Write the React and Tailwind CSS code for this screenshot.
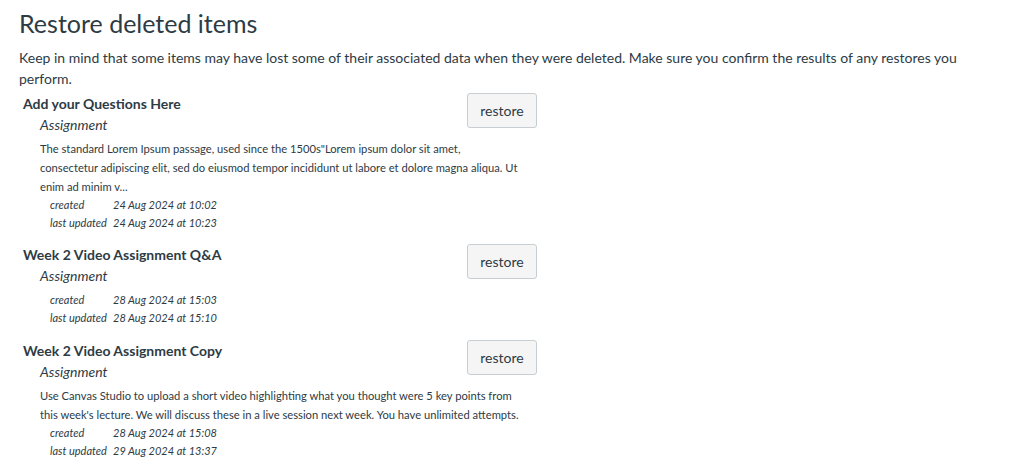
import React from "react";

const items = [
  {
    title: "Add your Questions Here",
    type: "Assignment",
    desc: [
      "The standard Lorem Ipsum passage, used since the 1500s\"Lorem ipsum dolor sit amet,",
      "consectetur adipiscing elit, sed do eiusmod tempor incididunt ut labore et dolore magna aliqua. Ut",
      "enim ad minim v...",
    ],
    created: "24 Aug 2024 at 10:02",
    updated: "24 Aug 2024 at 10:23",
    pb: "pb-[12px]",
  },
  {
    title: "Week 2 Video Assignment Q&A",
    type: "Assignment",
    desc: null,
    created: "28 Aug 2024 at 15:03",
    updated: "28 Aug 2024 at 15:10",
    pb: "pb-[13px]",
  },
  {
    title: "Week 2 Video Assignment Copy",
    type: "Assignment",
    desc: [
      "Use Canvas Studio to upload a short video highlighting what you thought were 5 key points from",
      "this week's lecture. We will discuss these in a live session next week. You have unlimited attempts.",
    ],
    created: "28 Aug 2024 at 15:08",
    updated: "29 Aug 2024 at 13:37",
    pb: "pb-[12px]",
  },
];

function Item({ item }) {
  return (
    <div className={"flex w-[518px] items-start justify-between " + item.pb}>
      <div className="w-[448px] shrink-0 pl-[4px] pt-[1px]">
        <div className="text-[14px] font-bold leading-[20px]">{item.title}</div>
        <div className="pl-[17px]">
          <div className="text-[14px] italic leading-[22px]">{item.type}</div>
          {item.desc && (
            <div className="mt-[3px] w-[490px] text-[11.2px] leading-[19px]">
              {item.desc.map((line, i) => (
                <div key={i} className="whitespace-nowrap">
                  {line}
                </div>
              ))}
            </div>
          )}
          <div
            className={
              item.desc
                ? "mt-[0px] pl-[10px] text-[11px] italic leading-[18px]"
                : "mt-[4px] pl-[10px] text-[11px] italic leading-[18px]"
            }
          >
            <div className="flex">
              <span className="w-[63px]">created</span>
              <span>{item.created}</span>
            </div>
            <div className="flex">
              <span className="w-[63px]">last updated</span>
              <span>{item.updated}</span>
            </div>
          </div>
        </div>
      </div>
      <button className="h-[35px] w-[70px] shrink-0 rounded-[3px] border border-[#c7cdd1] bg-[#f5f5f5] text-[14px] text-[#2d3b45]">
        restore
      </button>
    </div>
  );
}

export default function App() {
  return (
    <div
      className="h-[471px] overflow-hidden bg-white px-[19px] pt-[5px] text-[#2d3b45]"
      style={{ fontFamily: "Lato, 'Helvetica Neue', Arial, sans-serif" }}
    >
      <h1 className="text-[25px] font-normal leading-[36px]">Restore deleted items</h1>
      <p className="mt-[6px] w-[960px] text-[14px] leading-[21px]">
        Keep in mind that some items may have lost some of their associated data when they were deleted. Make sure you confirm the results of any restores you perform.
      </p>
      <div className="mt-[4px]">
        {items.map((it) => (
          <Item key={it.title} item={it} />
        ))}
      </div>
    </div>
  );
}
